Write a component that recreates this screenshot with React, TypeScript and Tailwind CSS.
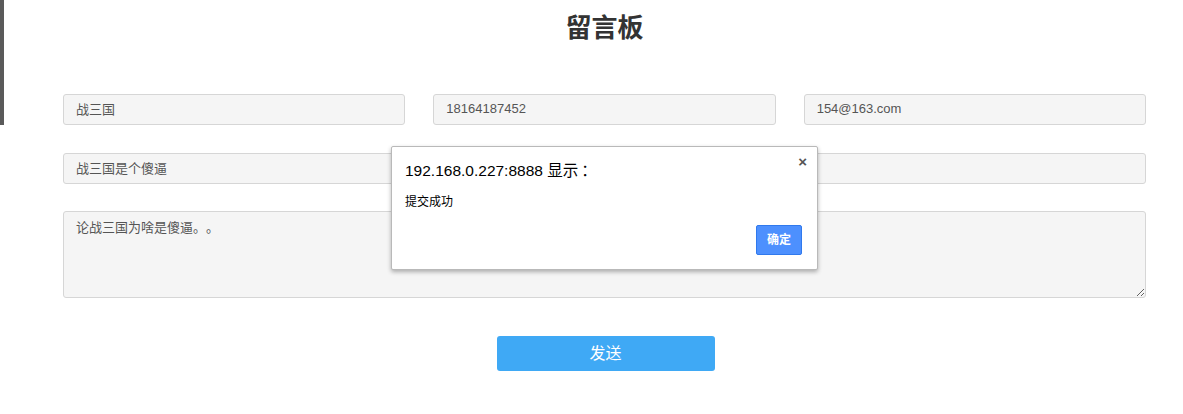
import React from 'react';

const font = { fontFamily: '"Liberation Sans", "Noto Sans CJK SC", sans-serif' };

function Field({ value, className = '' }: { value: string; className?: string }) {
  return (
    <input
      readOnly
      value={value}
      className={`h-[31px] rounded-[3px] border border-[#d6d6d6] bg-[#f5f5f5] px-3 pb-[2px] text-[13px] text-[#555] outline-none [text-spacing-trim:space-all] ${className}`}
    />
  );
}

function AlertBox() {
  return (
    <div className="absolute left-[391px] top-[146px] h-[124px] w-[427px] rounded-[2px] border border-[#b9b9b9] bg-white shadow-[0_2px_4px_rgba(0,0,0,0.3)]">
      <button className="absolute right-[10px] top-[7px] text-[15px] font-bold leading-none text-[#555]">×</button>
      <div className="pl-[13px] pt-[15px] text-[15.5px] leading-[18px] text-black">
        192.168.0.227:8888 显示<span className="ml-[3px]">：</span>
      </div>
      <div className="pl-[13px] pt-[15px] text-[12px] leading-[14px] text-black">提交成功</div>
      <button className="absolute right-[15px] top-[78px] h-[30px] w-[46px] rounded-[2px] border border-[#3079ed] bg-[#4d90fe] text-[12px] font-bold text-white">
        确定
      </button>
    </div>
  );
}

export default function App() {
  return (
    <div className="relative h-[414px] w-[1183px] overflow-hidden bg-white [text-spacing-trim:space-all]" style={font}>
      <div className="absolute left-0 top-0 h-[125px] w-[4px] bg-[#5a5a5a]" />
      <div className="ml-[63px] w-[1083px] pt-[10px]">
        <h1 className="text-center text-[26px] font-bold leading-[36px] text-[#333]">留言板</h1>
        <div className="mt-[48px] grid grid-cols-3 gap-x-[28px]">
          <Field value="战三国" />
          <Field value="18164187452" />
          <Field value="154@163.com" />
        </div>
        <Field value="战三国是个傻逼" className="mt-[28px] w-full" />
        <textarea
          readOnly
          value="论战三国为啥是傻逼。。"
          className="mt-[27px] block h-[87px] w-full rounded-[3px] border border-[#d6d6d6] bg-[#f5f5f5] px-3 py-[6px] text-[13px] text-[#555] outline-none [text-spacing-trim:space-all]"
        />
        <div className="mt-[38px] flex justify-center">
          <button className="ml-[2px] h-[35px] w-[218px] rounded-[3px] bg-[#3fa9f5] text-[16px] text-white">发送</button>
        </div>
      </div>
      <AlertBox />
    </div>
  );
}
